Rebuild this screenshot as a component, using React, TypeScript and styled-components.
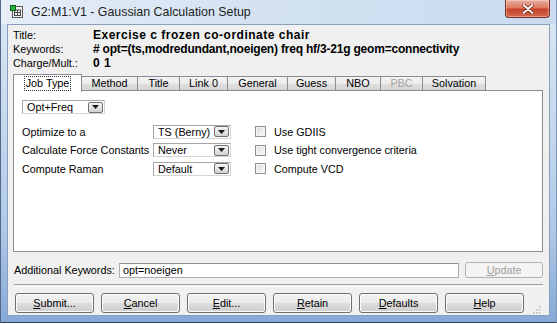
import { Fragment } from "react";
import styled, { createGlobalStyle } from "styled-components";

const GlobalStyle = createGlobalStyle`
  html, body {
    margin: 0;
    padding: 0;
    background: #ffffff;
  }
  body {
    font-family: "Liberation Sans", Arial, sans-serif;
    font-size: 10.8px;
    color: #000000;
  }
`;

const Window = styled.div`
  width: 557px;
  height: 323px;
  box-sizing: border-box;
  display: flex;
  flex-direction: column;
  border-left: 1px solid #52678a;
  border-right: 1px solid #7f98b8;
  border-bottom: 1px solid #2f3d57;
  background: linear-gradient(
    to bottom,
    #dce8f5 0%,
    #cbdcef 30%,
    #b1cae8 70%,
    #86a9d6 100%
  );
`;

const TitleBar = styled.div`
  height: 24px;
  flex: none;
  display: flex;
  align-items: flex-start;
  background: linear-gradient(100deg, #e6eef8 0%, #d5e3f2 40%, #c9dbef 100%);
`;

const AppIcon = styled.svg`
  margin: 5px 0 0 9px;
  flex: none;
`;

const Caption = styled.div`
  margin: 5px 0 0 7px;
  font-size: 12.4px;
  line-height: 14px;
  color: #1e1e1e;
`;

const CloseButton = styled.div`
  margin-left: auto;
  margin-right: 6px;
  width: 45px;
  height: 18px;
  box-sizing: border-box;
  border: 1px solid #7a2d20;
  border-top: none;
  border-radius: 0 0 4px 4px;
  display: flex;
  align-items: center;
  justify-content: center;
  background: linear-gradient(
    to bottom,
    #eab0a2 0%,
    #dd7a63 45%,
    #c8412a 55%,
    #d46b50 100%
  );
  box-shadow: inset 0 0 0 1px rgba(255, 220, 210, 0.45);
`;

const Client = styled.div`
  margin: 0 6px;
  height: 292px;
  box-sizing: border-box;
  border: 1px solid #8a9fbb;
  background: #f0f0f0;
  padding: 3px 6px 0 5px;
  display: flex;
  flex-direction: column;
`;

const InfoGrid = styled.div`
  display: grid;
  grid-template-columns: 80px 1fr;
  grid-auto-rows: 14px;
  line-height: 14px;
  white-space: nowrap;
`;

const InfoLabel = styled.div`
  color: #000000;
`;

const InfoValue = styled.div<{ $spacing?: number }>`
  font-weight: bold;
  font-size: 12px;
  letter-spacing: ${(p) => p.$spacing ?? 0}px;
`;

const TabStrip = styled.div`
  margin-top: 4px;
  height: 17px;
  display: flex;
  align-items: flex-end;
  position: relative;
  z-index: 1;
`;

const Tab = styled.div<{ $w: number; $active?: boolean; $disabled?: boolean }>`
  width: ${(p) => p.$w}px;
  box-sizing: border-box;
  height: ${(p) => (p.$active ? 18 : 15)}px;
  margin-left: -1px;
  margin-bottom: ${(p) => (p.$active ? -1 : 0)}px;
  border: 1px solid #898c95;
  border-bottom: ${(p) => (p.$active ? "none" : "1px solid #898c95")};
  background: ${(p) =>
    p.$active
      ? "#ffffff"
      : "linear-gradient(to bottom, #f4f4f4 0%, #ebebeb 50%, #dedede 51%, #d6d6d6 100%)"};
  color: ${(p) => (p.$disabled ? "#a3a3a3" : "#000000")};
  display: flex;
  justify-content: center;
  padding-top: ${(p) => (p.$active ? 2 : 0)}px;
  line-height: 13px;
  &:first-child {
    margin-left: 0;
  }
`;

const FocusText = styled.span`
  outline: 1px dotted #333333;
  outline-offset: 0px;
  padding: 0 1px;
  height: 13px;
`;

const Panel = styled.div`
  height: 162px;
  box-sizing: border-box;
  margin-top: -1px;
  border: 1px solid #898c95;
  background: #ffffff;
  padding: 9px 8px 0 8px;
  display: flex;
  flex-direction: column;
`;

const Combo = styled.div<{ $w: number }>`
  width: ${(p) => p.$w}px;
  height: 14px;
  box-sizing: border-box;
  border: 1px solid #a5a5a5;
  border-right-color: #d5d5d5;
  border-bottom-color: #d5d5d5;
  background: #ffffff;
  display: flex;
  align-items: center;
  padding-left: 4px;
  padding-right: 1px;
  line-height: 12px;
`;

const ComboText = styled.span`
  flex: 1;
  white-space: nowrap;
`;

const ComboArrow = styled.div`
  width: 15px;
  height: 11px;
  box-sizing: border-box;
  border: 1px solid #707070;
  border-radius: 2px;
  background: linear-gradient(to bottom, #f6f6f6 0%, #e4e4e4 50%, #d2d2d2 100%);
  display: flex;
  align-items: center;
  justify-content: center;
`;

const OptionsGrid = styled.div`
  margin-top: 10px;
  display: grid;
  grid-template-columns: 131px 78px 24px auto;
  grid-auto-rows: 15px;
  row-gap: 3.5px;
  align-items: center;
  white-space: nowrap;
`;

const CheckCell = styled.div`
  display: flex;
  align-items: center;
  gap: 8px;
`;

const CheckBox = styled.div`
  width: 11px;
  height: 11px;
  box-sizing: border-box;
  border: 1px solid #8f8f8f;
  background: linear-gradient(135deg, #d9d9d9 0%, #efefef 60%, #fbfbfb 100%);
  box-shadow: inset 0 0 0 1px #f4f4f4;
`;

const KeywordRow = styled.div`
  margin-top: 10px;
  height: 16px;
  display: flex;
  align-items: center;
  gap: 6px;
  white-space: nowrap;
`;

const KeywordLabel = styled.div`
  width: 99px;
  padding-left: 1px;
`;

const KeywordInput = styled.div`
  width: 341px;
  height: 15px;
  box-sizing: border-box;
  border: 1px solid #abadb3;
  border-top-color: #8f9196;
  background: #ffffff;
  padding-left: 3px;
  line-height: 13px;
`;

const Separator = styled.div`
  margin-top: 6px;
  margin-left: 1px;
  height: 1px;
  border-top: 1px solid #a0a0a0;
  border-bottom: 1px solid #ffffff;
`;

const ButtonRow = styled.div`
  margin-top: 6px;
  margin-left: 2px;
  display: flex;
  gap: 7px;
  align-items: center;
`;

const Button = styled.div<{ $w?: number; $disabled?: boolean }>`
  width: ${(p) => p.$w ?? 79}px;
  height: ${(p) => (p.$disabled ? 16 : 20)}px;
  box-sizing: border-box;
  border: 1px solid ${(p) => (p.$disabled ? "#adb2b5" : "#707070")};
  border-radius: 3px;
  background: ${(p) =>
    p.$disabled
      ? "#f4f4f4"
      : "linear-gradient(to bottom, #f2f2f2 0%, #ebebeb 50%, #dddddd 51%, #cfcfcf 100%)"};
  box-shadow: ${(p) => (p.$disabled ? "none" : "inset 0 0 0 1px #fcfcfc")};
  color: ${(p) => (p.$disabled ? "#a0a0a0" : "#000000")};
  display: flex;
  align-items: center;
  justify-content: center;
  line-height: 12px;
`;

const Grip = styled.svg`
  margin-left: auto;
  margin-right: 2px;
  align-self: flex-end;
  margin-bottom: -1px;
`;

const tabs = [
  { label: "Job Type", w: 69, active: true },
  { label: "Method", w: 57 },
  { label: "Title", w: 43 },
  { label: "Link 0", w: 49 },
  { label: "General", w: 61 },
  { label: "Guess", w: 49 },
  { label: "NBO", w: 46 },
  { label: "PBC", w: 43, disabled: true },
  { label: "Solvation", w: 64 },
];

const options = [
  { label: "Optimize to a", value: "TS (Berny)", check: "Use GDIIS" },
  { label: "Calculate Force Constants", value: "Never", check: "Use tight convergence criteria" },
  { label: "Compute Raman", value: "Default", check: "Compute VCD" },
];

const buttons = [
  { key: "S", rest: "ubmit..." },
  { key: "C", rest: "ancel" },
  { key: "E", rest: "dit..." },
  { key: "R", rest: "etain" },
  { key: "D", rest: "efaults" },
  { key: "H", rest: "elp" },
];

const Arrow = () => (
  <svg width="7" height="4" viewBox="0 0 7 4">
    <polygon points="0,0 7,0 3.5,4" fill="#1a1a1a" />
  </svg>
);

const ComboBox = ({ value, w }: { value: string; w: number }) => (
  <Combo $w={w}>
    <ComboText>{value}</ComboText>
    <ComboArrow>
      <Arrow />
    </ComboArrow>
  </Combo>
);

const App = () => {
  return (
    <>
      <GlobalStyle />
      <Window>
        <TitleBar>
          <AppIcon width="14" height="14" viewBox="0 0 14 14">
            <rect x="2.5" y="1.5" width="10" height="11" fill="#f4f4f4" stroke="#5a5a5a" />
            <rect x="4.5" y="5" width="6" height="5.5" fill="none" stroke="#444" strokeWidth="1" />
            <line x1="7.5" y1="5" x2="7.5" y2="10.5" stroke="#444" />
            <line x1="4.5" y1="7.5" x2="10.5" y2="7.5" stroke="#444" />
            <rect x="0.5" y="0.5" width="5" height="5" fill="#1fb53a" stroke="#0b5f1a" />
          </AppIcon>
          <Caption>G2:M1:V1 - Gaussian Calculation Setup</Caption>
          <CloseButton>
            <svg width="12" height="10" viewBox="0 0 12 10">
              <path d="M1.5 1 L10.5 9 M10.5 1 L1.5 9" stroke="#6b2418" strokeWidth="3.4" strokeLinecap="round" />
              <path d="M1.5 1 L10.5 9 M10.5 1 L1.5 9" stroke="#ffffff" strokeWidth="1.8" strokeLinecap="round" />
            </svg>
          </CloseButton>
        </TitleBar>

        <Client>
          <InfoGrid>
            <InfoLabel>Title:</InfoLabel>
            <InfoValue $spacing={0.5}>Exercise c frozen co-ordinate chair</InfoValue>
            <InfoLabel>Keywords:</InfoLabel>
            <InfoValue $spacing={-0.2}>
              # opt=(ts,modredundant,noeigen) freq hf/3-21g geom=connectivity
            </InfoValue>
            <InfoLabel>Charge/Mult.:</InfoLabel>
            <InfoValue $spacing={0.5}>0 1</InfoValue>
          </InfoGrid>

          <TabStrip>
            {tabs.map((t) => (
              <Tab key={t.label} $w={t.w} $active={t.active} $disabled={t.disabled}>
                {t.active ? <FocusText>{t.label}</FocusText> : t.label}
              </Tab>
            ))}
          </TabStrip>

          <Panel>
            <ComboBox value="Opt+Freq" w={83} />
            <OptionsGrid>
              {options.map((o) => (
                <Fragment key={o.label}>
                  <div>{o.label}</div>
                  <ComboBox value={o.value} w={78} />
                  <div />
                  <CheckCell>
                    <CheckBox />
                    {o.check}
                  </CheckCell>
                </Fragment>
              ))}
            </OptionsGrid>
          </Panel>

          <KeywordRow>
            <KeywordLabel>Additional Keywords:</KeywordLabel>
            <KeywordInput>opt=noeigen</KeywordInput>
            <Button $w={78} $disabled>
              <u>U</u>pdate
            </Button>
          </KeywordRow>

          <Separator />

          <ButtonRow>
            {buttons.map((b) => (
              <Button key={b.key}>
                <u>{b.key}</u>
                {b.rest}
              </Button>
            ))}
            <Grip width="9" height="9" viewBox="0 0 9 9">
              {[
                [7, 1],
                [7, 4],
                [4, 4],
                [7, 7],
                [4, 7],
                [1, 7],
              ].map(([x, y]) => (
                <rect key={`${x}-${y}`} x={x} y={y} width="1.5" height="1.5" fill="#b8b8b8" />
              ))}
            </Grip>
          </ButtonRow>
        </Client>
      </Window>
    </>
  );
};

export default App;
